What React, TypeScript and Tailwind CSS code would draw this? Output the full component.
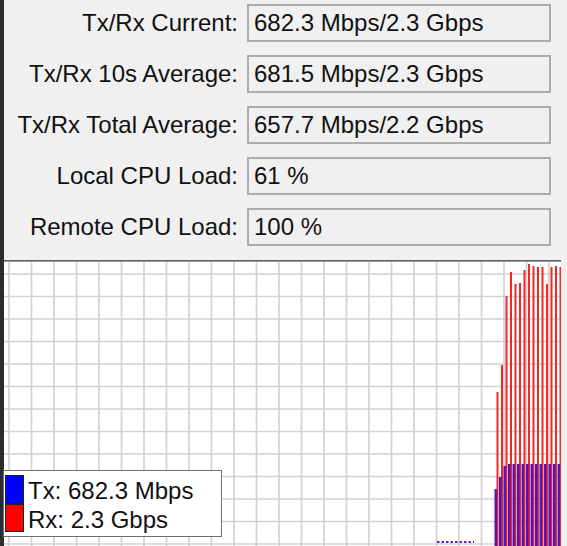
import React from 'react';

const stats = [
  { label: 'Tx/Rx Current:', value: '682.3 Mbps/2.3 Gbps' },
  { label: 'Tx/Rx 10s Average:', value: '681.5 Mbps/2.3 Gbps' },
  { label: 'Tx/Rx Total Average:', value: '657.7 Mbps/2.2 Gbps' },
  { label: 'Local CPU Load:', value: '61 %' },
  { label: 'Remote CPU Load:', value: '100 %' },
];

// bar tops in chart coords (chart starts at y=262 on the page)
const rxTops = [392, 365, 296, 272, 284, 283, 270, 264, 266, 267, 267, 284, 267, 266, 267].map(y => y - 262);
const txTops = [489, 477, 466, 464, 464, 464, 464, 464, 464, 464, 464, 464, 464, 464, 464].map(y => y - 262);

const CHART_W = 557;
const CHART_H = 284;

const Chart: React.FC = () => {
  const vLines = Array.from({ length: 25 }, (_, k) => 5 + 22.5 * k);
  const hLines = Array.from({ length: 13 }, (_, k) => 12 + 22.5 * k);

  return (
    <svg width={CHART_W} height={CHART_H} className="block">
      <rect width={CHART_W} height={CHART_H} fill="#ffffff" />
      {vLines.map(x => (
        <line key={`v${x}`} x1={x} y1={0} x2={x} y2={CHART_H} stroke="#d2d2d2" strokeWidth={1.7} />
      ))}
      {hLines.map(y => (
        <line key={`h${y}`} x1={0} y1={y} x2={CHART_W} y2={y} stroke="#d2d2d2" strokeWidth={1.7} />
      ))}
      {/* tiny tx/rx blip */}
      <line x1={433} y1={280} x2={470} y2={280} stroke="#6a1fc0" strokeWidth={2} strokeDasharray="2.5 2" />
      {rxTops.map((top, i) => {
        const x = 493.5 + 4.5 * i;
        return (
          <g key={i}>
            <rect x={x - 1} y={top} width={2} height={CHART_H - top} fill="#f02828" />
            <rect x={x - 3} y={txTops[i]} width={2.6} height={CHART_H - txTops[i]} fill="#5614b4" />
          </g>
        );
      })}
    </svg>
  );
};

export default function App() {
  return (
    <div
      className="flex w-[567px] h-[546px] overflow-hidden bg-[#f0f0f0] text-[#111]"
      style={{ fontFamily: '"Liberation Sans", Arial, sans-serif' }}
    >
      <div className="w-[4px] shrink-0 bg-[#2c2c2c]" />
      <div className="flex flex-col flex-1">
        <div className="flex flex-col gap-[13px] pt-[4px] pb-[14px]">
          {stats.map(s => (
            <div key={s.label} className="flex items-center gap-[9px] h-[38px]">
              <div className="w-[234px] text-right text-[24px] leading-none">{s.label}</div>
              <div className="w-[304px] h-[38px] border-2 border-[#acacac] bg-[#f0f0f0] flex items-center pl-[5px] text-[24px] leading-none">
                {s.value}
              </div>
            </div>
          ))}
        </div>
        <div className="flex flex-1">
          <div className="relative w-[557px] flex flex-col">
            <div className="h-[1px] bg-[#5e5e5e]" />
            <div className="h-[1px] bg-[#9a9a9a]" />
            <Chart />
            <div className="absolute left-[-1px] top-[210px] w-[219px] h-[67px] bg-white border border-[#6e6e6e] flex flex-col pt-[3px] pl-[1px]">
              <div className="flex items-center h-[30px]">
                <div className="w-[19px] h-[29px] bg-[#0000ff] border border-[#222]" />
                <span className="ml-[4px] pt-[3px] text-[24px] leading-none">Tx: 682.3 Mbps</span>
              </div>
              <div className="flex items-center h-[28px]">
                <div className="w-[19px] h-[28px] bg-[#ff0000] border border-[#222]" />
                <span className="ml-[4px] pt-[3px] text-[24px] leading-none">Rx: 2.3 Gbps</span>
              </div>
            </div>
          </div>
          <div className="flex-1 bg-[#f0f0f0]" />
        </div>
      </div>
    </div>
  );
}
